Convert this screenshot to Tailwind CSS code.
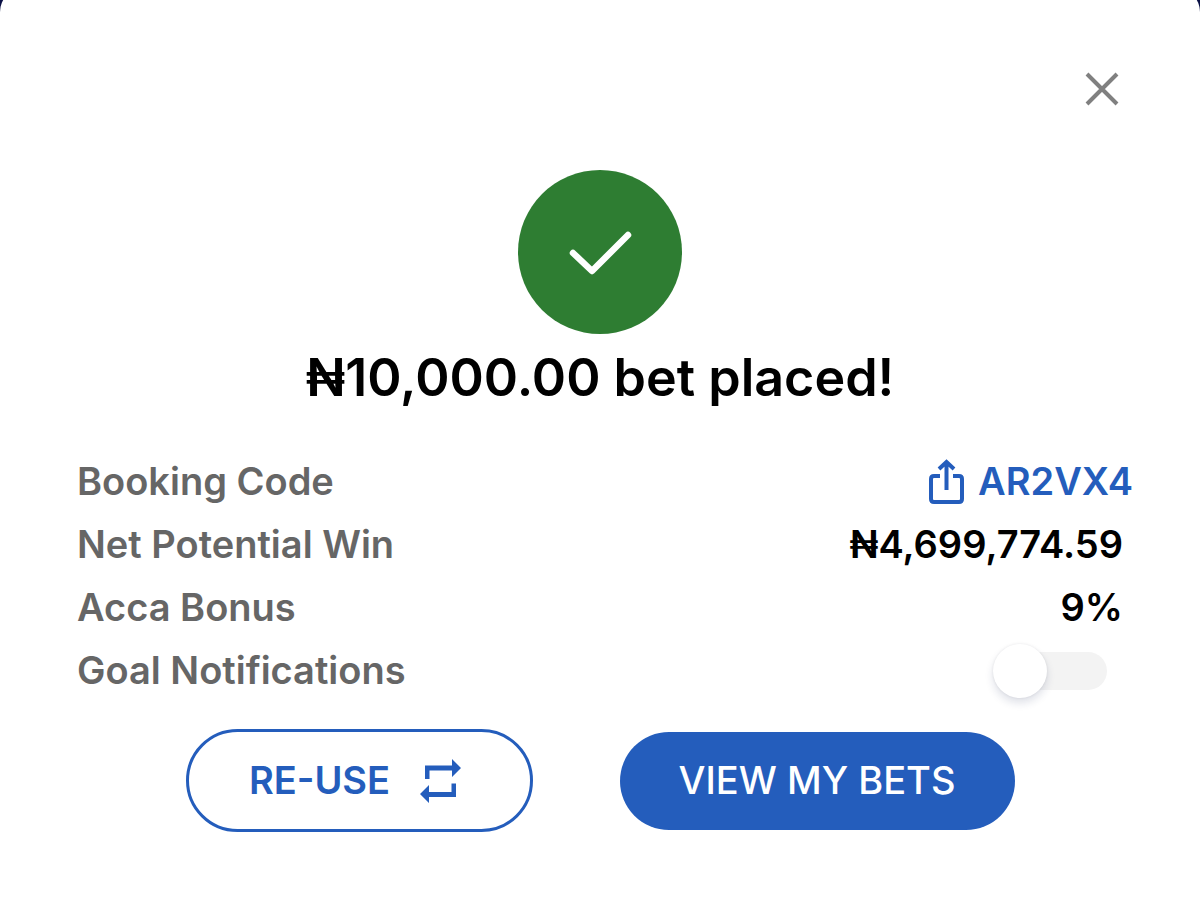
<!DOCTYPE html>
<html lang="en" class="h-full">
  <head>
    <meta charset="UTF-8" />
    <meta name="viewport" content="width=device-width, initial-scale=1.0" />
    <title>Bet placed</title>
    <script src="https://cdn.jsdelivr.net/npm/@tailwindcss/browser@4"></script>
  </head>

  <body
    class="flex h-full flex-col overflow-hidden bg-[#0a1045] font-['Inter',sans-serif] font-semibold text-black"
  >
    <main class="-mt-3 flex grow flex-col rounded-t-3xl bg-white">
      <div class="flex justify-end px-[78px] pt-[81px]">
        <button type="button" aria-label="Close" class="h-10 w-10 text-[#808080]">
          <svg viewBox="0 0 40 40" fill="none" stroke="currentColor" stroke-width="4">
            <path d="M5 5l30 30M35 5L5 35" />
          </svg>
        </button>
      </div>

      <div class="flex flex-col items-center pt-[61px]">
        <div class="flex h-[164px] w-[164px] items-center justify-center rounded-full bg-[#2e7d32]">
          <svg
            class="h-[164px] w-[164px] text-white"
            viewBox="0 0 164 164"
            fill="none"
            stroke="currentColor"
            stroke-width="6.500"
            stroke-linecap="round"
            stroke-linejoin="round"
          >
            <path d="M55 83L74 101L110 65" />
          </svg>
        </div>
        <h1 class="mt-3 text-[52px] leading-[64px]">₦10,000.00 bet placed!</h1>
      </div>

      <div class="mt-10 px-[77px] text-[38px] leading-[63px] text-[#666666]">
        <div class="flex justify-between">
          <span>Booking Code</span>
          <a href="#" class="-mr-[10px] flex items-center gap-[14px] text-[#245dbc]">
            <svg
              class="h-[46px] w-[35px]"
              viewBox="0 0 35 46"
              fill="none"
              stroke="currentColor"
              stroke-width="4"
            >
              <path d="M11 17H5Q2 17 2 20V40Q2 43 5 43H30Q33 43 33 40V20Q33 17 30 17H24" />
              <path d="M17.500 31V4M10 10L17.500 3L25 10" />
            </svg>
            AR2VX4
          </a>
        </div>
        <div class="flex justify-between">
          <span>Net Potential Win</span>
          <span class="text-black">₦4,699,774.59</span>
        </div>
        <div class="flex justify-between">
          <span>Acca Bonus</span>
          <span class="text-black">9%</span>
        </div>
        <div class="flex items-center justify-between">
          <label for="notifications">Goal Notifications</label>
          <input
            id="notifications"
            type="checkbox"
            role="switch"
            class="mr-4 flex h-[38px] w-[107px] appearance-none items-center rounded-full bg-[#f3f3f3] before:-ml-[7px] before:h-[54px] before:w-[54px] before:rounded-full before:bg-white before:shadow-[0_5px_9px_rgba(30,40,90,0.14),0_0_3px_rgba(0,0,0,0.08)] before:content-[''] checked:justify-end checked:bg-[#245dbc]"
          />
        </div>
      </div>

      <div class="mt-[27px] flex items-center justify-center gap-[87px] text-[38px]">
        <button
          type="button"
          class="flex h-[103px] w-[347px] items-center justify-center gap-[30px] rounded-full border-3 border-[#245dbc] pr-2 text-[#245dbc]"
        >
          RE-USE
          <svg class="h-[44px] w-[41px]" viewBox="0 0 41 44" fill="currentColor">
            <path d="M5 6.500H32V0L41 9L32 18V11.500H9.500V20H5z" />
            <path d="M36 38H9V44L0 35L9 26V33H31.500V24.500H36z" />
          </svg>
        </button>
        <button
          type="button"
          class="h-[98px] w-[395px] rounded-full bg-[#245dbc] font-medium text-white"
        >
          VIEW MY BETS
        </button>
      </div>
    </main>
  </body>
</html>
